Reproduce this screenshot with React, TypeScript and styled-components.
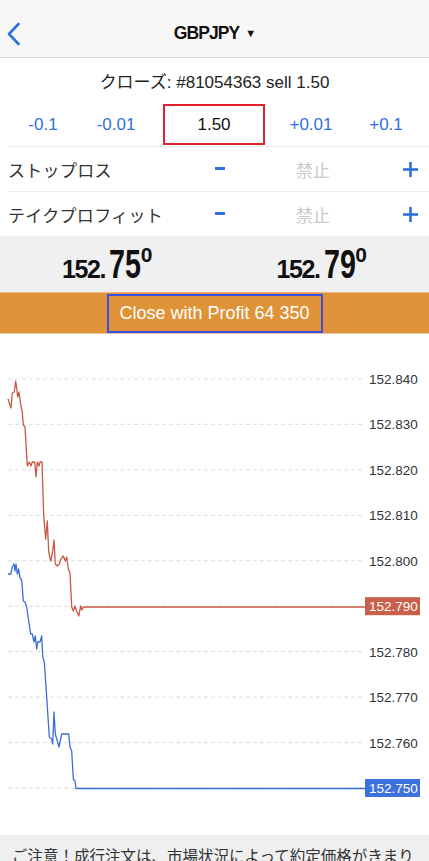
import React from 'react';
import {createGlobalStyle, styled} from 'styled-components';

const $blue = '#2f6fdf';
const $jp = `"Liberation Sans", "Noto Sans CJK JP", sans-serif`;

const GlobalStyle = createGlobalStyle`
  html, body {
    margin: 0;
    padding: 0;
    background: #fff;
  }
  body {
    font-family: ${$jp};
    color: #222;
    width: 429px;
    height: 861px;
    overflow: hidden;
  }
`;

const Screen = styled.main`
  width: 429px;
  height: 861px;
  overflow: hidden;
  display: flex;
  flex-direction: column;
`;

// ---------------------------------

const Header = styled.header`
  height: 58px;
  box-sizing: border-box;
  padding-top: 10px;
  background: #f7f7f7;
  border-bottom: 1px solid #d6d6d6;
  display: grid;
  grid-template-columns: 60px 1fr 60px;
  align-items: center;
`;

const BackButton = styled.div`
  padding-left: 6px;
  display: flex;
  align-items: center;
`;

const Title = styled.h1`
  margin: 0;
  text-align: center;
  font-family: "Liberation Sans", sans-serif;
  font-size: 17.5px;
  font-weight: 700;
  color: #111;
  letter-spacing: -0.9px;
  span {
    font-size: 11px;
    margin-left: 6px;
    vertical-align: 2px;
  }
`;

const OrderLine = styled.div`
  height: 44px;
  display: flex;
  align-items: center;
  justify-content: center;
  font-size: 17px;
  color: #222;
`;

// ---------------------------------

const VolumeRow = styled.div`
  height: 44px;
  margin-left: 8px;
  border-bottom: 1px solid #ececec;
  display: flex;
  align-items: center;
`;

const StepButton = styled.div<{$w: number}>`
  width: ${p => p.$w}px;
  text-align: center;
  color: ${$blue};
  font-size: 17px;
  padding-top: 2px;
`;

const VolumeBox = styled.div`
  width: 102px;
  height: 41px;
  margin-left: 9px;
  box-sizing: border-box;
  border: 2px solid #e3232b;
  display: flex;
  align-items: center;
  justify-content: center;
  font-size: 17px;
  color: #111;
  padding-top: 2px;
`;

const LevelRow = styled.div<{$last?: boolean}>`
  height: 44px;
  margin-left: 8px;
  border-bottom: ${p => (p.$last ? 'none' : '1px solid #ececec')};
  display: grid;
  grid-template-columns: 182px 60px 126px 1fr;
  align-items: center;
`;

const LevelLabel = styled.div`
  font-size: 17px;
  color: #333;
  letter-spacing: 0.3px;
`;

const LevelValue = styled.div`
  text-align: center;
  font-size: 17px;
  color: #c9c9c9;
`;

const IconCell = styled.div<{$pad?: number}>`
  display: flex;
  justify-content: center;
  padding-left: ${p => p.$pad ?? 0}px;
`;

// ---------------------------------

const PriceRow = styled.div`
  height: 56px;
  background: #f0f0f0;
  display: grid;
  grid-template-columns: 1fr 1fr;
  align-items: center;
`;

const Price = styled.div`
  display: flex;
  justify-content: center;
  align-items: baseline;
  font-family: "Liberation Sans", sans-serif;
  font-weight: 700;
  color: #111;
  line-height: 1;
  padding-top: 1px;
`;

const PriceSmall = styled.span`
  font-size: 25px;
  letter-spacing: -1.4px;
`;

const PriceBig = styled.span`
  display: inline-block;
  font-size: 41px;
  margin-left: 4px;
  margin-right: -15px;
  transform: scaleX(0.7);
  transform-origin: left center;
`;

const PriceSup = styled.span`
  font-size: 21px;
  align-self: flex-start;
  margin-top: 0;
  margin-left: 1px;
`;

const ActionBar = styled.div`
  height: 42px;
  background: #df9237;
  border-top: 1px solid #e9b888;
  border-bottom: 1px solid #e6c7a6;
  box-sizing: border-box;
  display: flex;
  justify-content: center;
  align-items: center;
`;

const CloseButton = styled.div`
  width: 216px;
  height: 39px;
  box-sizing: border-box;
  border: 2px solid #3a4ee6;
  color: #fff;
  font-size: 18px;
  display: flex;
  align-items: center;
  justify-content: center;
`;

// ---------------------------------

const ChartArea = styled.section`
  height: 501px;
  background: #fff;
  flex-shrink: 0;
`;

const Note = styled.div`
  flex: 1;
  background: #efefef;
  padding: 9px 0 0 12px;
  font-size: 15.5px;
  color: #333;
  white-space: nowrap;
  overflow: hidden;
`;

// ---------------------------------

const TOP = 335;
const GRID_BASE = 789 - TOP;
const GRID_STEP = 45.45;

const redPts: Array<[number, number]> = [
  [8, 400], [11, 409], [12.3, 394], [14.3, 393], [15.7, 382], [17.7, 398],
  [19, 393], [20.7, 406], [22.3, 413], [23.3, 426], [25, 428], [27.3, 467],
  [29.3, 463], [31, 467], [32.3, 463], [34.7, 463], [36, 478], [37.3, 463],
  [39, 467], [40, 463], [42, 463], [43.7, 517], [45.7, 540], [47.3, 522],
  [48.7, 553], [50.7, 562], [52.7, 552], [54, 541], [55.3, 565], [57.3, 567],
  [59.3, 565], [61, 560], [63.3, 557], [65.3, 562], [66.7, 558], [68.3, 570],
  [70, 574], [71.7, 608], [73.3, 612], [75, 607], [76.7, 612], [78.7, 617],
  [80.7, 607], [82, 611], [83.3, 608], [365, 608],
];

const bluePts: Array<[number, number]> = [
  [8, 575], [10.7, 575], [12.3, 568], [14, 565], [15, 572], [16, 565],
  [17.3, 575], [18.7, 570], [20, 579], [21.7, 581], [23.3, 602], [25, 603],
  [26.7, 608], [28.7, 622], [30.7, 635], [32.3, 635], [34, 643], [35.3, 637],
  [36.7, 650], [37.7, 643], [40, 643], [41.7, 637], [42.7, 658], [44.3, 663],
  [46.7, 698], [49.3, 738], [51.7, 740], [52.7, 745], [54, 713], [55.3, 735],
  [57.3, 742], [59, 748], [61.7, 735], [65, 735], [68.7, 735], [70, 748],
  [71.7, 752], [73.3, 780], [75, 782], [76, 789.5], [365, 789.5],
];

const toPoints = (pts: Array<[number, number]>) =>
  pts.map(([x, y]) => `${x},${y - TOP}`).join(' ');

const levels = [
  '152.840', '152.830', '152.820', '152.810', '152.800',
  '152.790', '152.780', '152.770', '152.760', '152.750',
];

function PriceChart() {
  return (
    <svg width="429" height="501" viewBox="0 0 429 501">
      {levels.map((label, i) => {
        const y = GRID_BASE - (levels.length - 1 - i) * GRID_STEP;
        const badge =
          label === '152.790' ? '#c8604b' : label === '152.750' ? '#3d72dc' : null;
        return (
          <g key={label}>
            <line
              x1="8"
              x2="362"
              y1={y}
              y2={y}
              stroke="#dedede"
              strokeWidth="1"
              strokeDasharray="4 3"
            />
            {badge && (
              <rect x="365" y={y - 9} width="55" height="18" fill={badge} />
            )}
            <text
              x="369"
              y={y + 5}
              fontFamily="Liberation Sans, sans-serif"
              fontSize="13.5"
              fill={badge ? '#fff' : '#333'}
            >
              {label}
            </text>
          </g>
        );
      })}
      <polyline
        points={toPoints(redPts)}
        fill="none"
        stroke="#c65a46"
        strokeWidth="1.3"
        strokeLinejoin="round"
      />
      <polyline
        points={toPoints(bluePts)}
        fill="none"
        stroke="#3a6fd5"
        strokeWidth="1.3"
        strokeLinejoin="round"
      />
    </svg>
  );
}

function Minus() {
  return (
    <svg width="10" height="4" viewBox="0 0 10 4">
      <rect x="0" y="0" width="10" height="3" fill={$blue} />
    </svg>
  );
}

function Plus() {
  return (
    <svg width="15" height="15" viewBox="0 0 15 15">
      <rect x="0" y="6.2" width="15" height="2.6" fill={$blue} />
      <rect x="6.2" y="0" width="2.6" height="15" fill={$blue} />
    </svg>
  );
}

type PriceProps = Readonly<{head: string; big: string; tail: string}>;

function PriceQuote(props: PriceProps) {
  return (
    <Price>
      <PriceSmall>{props.head}</PriceSmall>
      <PriceBig>{props.big}</PriceBig>
      <PriceSup>{props.tail}</PriceSup>
    </Price>
  );
}

export default function App() {
  return (
    <Screen>
      <GlobalStyle />
      <Header>
        <BackButton>
          <svg width="16" height="24" viewBox="0 0 16 24">
            <path
              d="M12.5 2 L3 12 L12.5 22"
              fill="none"
              stroke={$blue}
              strokeWidth="2.6"
              strokeLinecap="round"
              strokeLinejoin="round"
            />
          </svg>
        </BackButton>
        <Title>
          GBPJPY<span>▼</span>
        </Title>
        <div />
      </Header>
      <OrderLine>クローズ: #81054363 sell 1.50</OrderLine>
      <VolumeRow>
        <StepButton $w={70}>-0.1</StepButton>
        <StepButton $w={76}>-0.01</StepButton>
        <VolumeBox>1.50</VolumeBox>
        <StepButton $w={92}>+0.01</StepButton>
        <StepButton $w={58}>+0.1</StepButton>
      </VolumeRow>
      <LevelRow>
        <LevelLabel>ストップロス</LevelLabel>
        <IconCell>
          <Minus />
        </IconCell>
        <LevelValue>禁止</LevelValue>
        <IconCell $pad={16}>
          <Plus />
        </IconCell>
      </LevelRow>
      <LevelRow $last>
        <LevelLabel>テイクプロフィット</LevelLabel>
        <IconCell>
          <Minus />
        </IconCell>
        <LevelValue>禁止</LevelValue>
        <IconCell $pad={16}>
          <Plus />
        </IconCell>
      </LevelRow>
      <PriceRow>
        <PriceQuote head="152." big="75" tail="0" />
        <PriceQuote head="152." big="79" tail="0" />
      </PriceRow>
      <ActionBar>
        <CloseButton>Close with Profit 64 350</CloseButton>
      </ActionBar>
      <ChartArea>
        <PriceChart />
      </ChartArea>
      <Note>ご注意！成行注文は、市場状況によって約定価格がきまり</Note>
    </Screen>
  );
}
